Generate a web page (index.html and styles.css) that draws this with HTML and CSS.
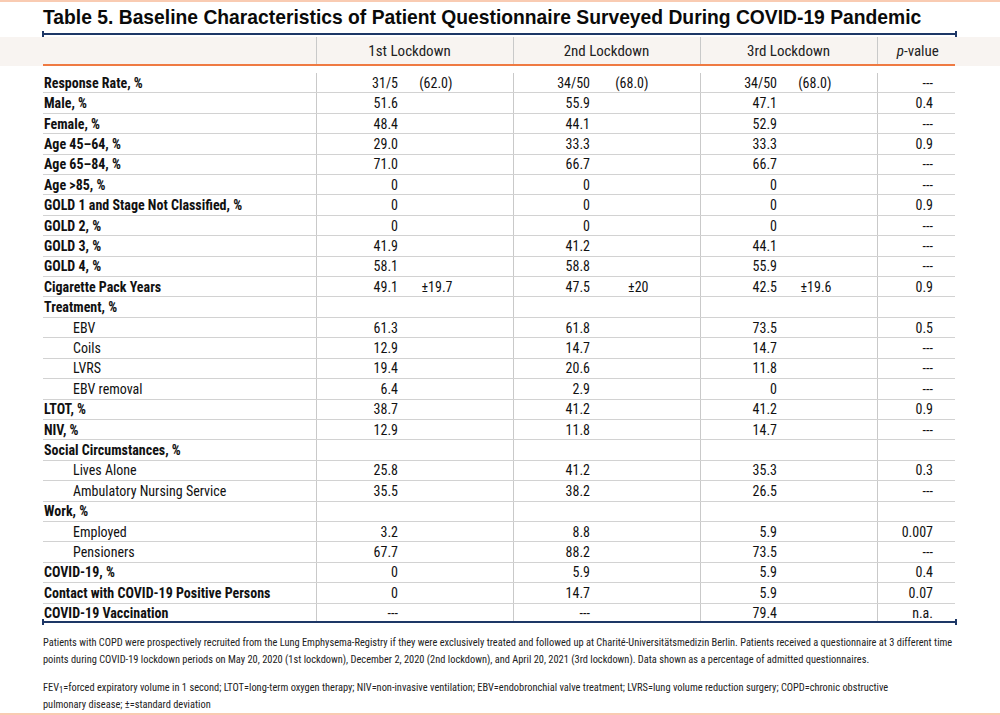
FILE: index.html
```html
<!DOCTYPE html>
<html>
<head>
<meta charset="utf-8">
<link rel="stylesheet" href="styles.css">
</head>
<body>
<div class="page">
  <h1 class="title">Table 5. Baseline Characteristics of Patient Questionnaire Surveyed During COVID-19 Pandemic</h1>
  <div class="rule"></div>
  <div class="band">
    <table class="grid head">
      <colgroup>
        <col class="c-label"><col class="c-v1"><col class="c-s1"><col class="c-v2"><col class="c-s2"><col class="c-v3"><col class="c-s3"><col class="c-p">
      </colgroup>
      <tr>
        <th></th>
        <th colspan="2" class="g">1st Lockdown</th>
        <th colspan="2" class="g">2nd Lockdown</th>
        <th colspan="2" class="g">3rd Lockdown</th>
        <th class="g"><i>p</i>-value</th>
      </tr>
    </table>
  </div>
  <div class="body-wrap">
    <table class="grid body">
      <colgroup>
        <col class="c-label"><col class="c-v1"><col class="c-s1"><col class="c-v2"><col class="c-s2"><col class="c-v3"><col class="c-s3"><col class="c-p">
      </colgroup>
      <tr><td class="lab">Response Rate, %</td><td class="v g">31/5</td><td class="s s1">(62.0)</td><td class="v g">34/50</td><td class="s s2">(68.0)</td><td class="v g">34/50</td><td class="s s3">(68.0)</td><td class="p g">---</td></tr>
      <tr><td class="lab">Male, %</td><td class="v g">51.6</td><td class="s s1"></td><td class="v g">55.9</td><td class="s s2"></td><td class="v g">47.1</td><td class="s s3"></td><td class="p g">0.4</td></tr>
      <tr><td class="lab">Female, %</td><td class="v g">48.4</td><td class="s s1"></td><td class="v g">44.1</td><td class="s s2"></td><td class="v g">52.9</td><td class="s s3"></td><td class="p g">---</td></tr>
      <tr><td class="lab">Age 45–64, %</td><td class="v g">29.0</td><td class="s s1"></td><td class="v g">33.3</td><td class="s s2"></td><td class="v g">33.3</td><td class="s s3"></td><td class="p g">0.9</td></tr>
      <tr><td class="lab">Age 65–84, %</td><td class="v g">71.0</td><td class="s s1"></td><td class="v g">66.7</td><td class="s s2"></td><td class="v g">66.7</td><td class="s s3"></td><td class="p g">---</td></tr>
      <tr><td class="lab">Age &gt;85, %</td><td class="v g">0</td><td class="s s1"></td><td class="v g">0</td><td class="s s2"></td><td class="v g">0</td><td class="s s3"></td><td class="p g">---</td></tr>
      <tr><td class="lab">GOLD 1 and Stage Not Classified, %</td><td class="v g">0</td><td class="s s1"></td><td class="v g">0</td><td class="s s2"></td><td class="v g">0</td><td class="s s3"></td><td class="p g">0.9</td></tr>
      <tr><td class="lab">GOLD 2, %</td><td class="v g">0</td><td class="s s1"></td><td class="v g">0</td><td class="s s2"></td><td class="v g">0</td><td class="s s3"></td><td class="p g">---</td></tr>
      <tr><td class="lab">GOLD 3, %</td><td class="v g">41.9</td><td class="s s1"></td><td class="v g">41.2</td><td class="s s2"></td><td class="v g">44.1</td><td class="s s3"></td><td class="p g">---</td></tr>
      <tr><td class="lab">GOLD 4, %</td><td class="v g">58.1</td><td class="s s1"></td><td class="v g">58.8</td><td class="s s2"></td><td class="v g">55.9</td><td class="s s3"></td><td class="p g">---</td></tr>
      <tr><td class="lab">Cigarette Pack Years</td><td class="v g">49.1</td><td class="s s1">±19.7</td><td class="v g">47.5</td><td class="s s2">±20</td><td class="v g">42.5</td><td class="s s3">±19.6</td><td class="p g">0.9</td></tr>
      <tr><td class="lab">Treatment, %</td><td class="v g"></td><td class="s s1"></td><td class="v g"></td><td class="s s2"></td><td class="v g"></td><td class="s s3"></td><td class="p g"></td></tr>
      <tr><td class="sub">EBV</td><td class="v g">61.3</td><td class="s s1"></td><td class="v g">61.8</td><td class="s s2"></td><td class="v g">73.5</td><td class="s s3"></td><td class="p g">0.5</td></tr>
      <tr><td class="sub">Coils</td><td class="v g">12.9</td><td class="s s1"></td><td class="v g">14.7</td><td class="s s2"></td><td class="v g">14.7</td><td class="s s3"></td><td class="p g">---</td></tr>
      <tr><td class="sub">LVRS</td><td class="v g">19.4</td><td class="s s1"></td><td class="v g">20.6</td><td class="s s2"></td><td class="v g">11.8</td><td class="s s3"></td><td class="p g">---</td></tr>
      <tr><td class="sub">EBV removal</td><td class="v g">6.4</td><td class="s s1"></td><td class="v g">2.9</td><td class="s s2"></td><td class="v g">0</td><td class="s s3"></td><td class="p g">---</td></tr>
      <tr><td class="lab">LTOT, %</td><td class="v g">38.7</td><td class="s s1"></td><td class="v g">41.2</td><td class="s s2"></td><td class="v g">41.2</td><td class="s s3"></td><td class="p g">0.9</td></tr>
      <tr><td class="lab">NIV, %</td><td class="v g">12.9</td><td class="s s1"></td><td class="v g">11.8</td><td class="s s2"></td><td class="v g">14.7</td><td class="s s3"></td><td class="p g">---</td></tr>
      <tr><td class="lab">Social Circumstances, %</td><td class="v g"></td><td class="s s1"></td><td class="v g"></td><td class="s s2"></td><td class="v g"></td><td class="s s3"></td><td class="p g"></td></tr>
      <tr><td class="sub">Lives Alone</td><td class="v g">25.8</td><td class="s s1"></td><td class="v g">41.2</td><td class="s s2"></td><td class="v g">35.3</td><td class="s s3"></td><td class="p g">0.3</td></tr>
      <tr><td class="sub">Ambulatory Nursing Service</td><td class="v g">35.5</td><td class="s s1"></td><td class="v g">38.2</td><td class="s s2"></td><td class="v g">26.5</td><td class="s s3"></td><td class="p g">---</td></tr>
      <tr><td class="lab">Work, %</td><td class="v g"></td><td class="s s1"></td><td class="v g"></td><td class="s s2"></td><td class="v g"></td><td class="s s3"></td><td class="p g"></td></tr>
      <tr><td class="sub">Employed</td><td class="v g">3.2</td><td class="s s1"></td><td class="v g">8.8</td><td class="s s2"></td><td class="v g">5.9</td><td class="s s3"></td><td class="p g">0.007</td></tr>
      <tr><td class="sub">Pensioners</td><td class="v g">67.7</td><td class="s s1"></td><td class="v g">88.2</td><td class="s s2"></td><td class="v g">73.5</td><td class="s s3"></td><td class="p g">---</td></tr>
      <tr><td class="lab">COVID-19, %</td><td class="v g">0</td><td class="s s1"></td><td class="v g">5.9</td><td class="s s2"></td><td class="v g">5.9</td><td class="s s3"></td><td class="p g">0.4</td></tr>
      <tr><td class="lab">Contact with COVID-19 Positive Persons</td><td class="v g">0</td><td class="s s1"></td><td class="v g">14.7</td><td class="s s2"></td><td class="v g">5.9</td><td class="s s3"></td><td class="p g">0.07</td></tr>
      <tr class="last"><td class="lab">COVID-19 Vaccination</td><td class="v g">---</td><td class="s s1"></td><td class="v g">---</td><td class="s s2"></td><td class="v g">79.4</td><td class="s s3"></td><td class="p g">n.a.</td></tr>
    </table>
  </div>
  <div class="rule rule-bottom"></div>
  <div class="notes">
    <p>Patients with COPD were prospectively recruited from the Lung Emphysema-Registry if they were exclusively treated and followed up at Charité-Universitätsmedizin Berlin. Patients received a questionnaire at 3 different time<br>points during COVID-19 lockdown periods on May 20, 2020 (1st lockdown), December 2, 2020 (2nd lockdown), and April 20, 2021 (3rd lockdown). Data shown as a percentage of admitted questionnaires.</p>
    <p>FEV<sub>1</sub>=forced expiratory volume in 1 second; LTOT=long-term oxygen therapy; NIV=non-invasive ventilation; EBV=endobronchial valve treatment; LVRS=lung volume reduction surgery; COPD=chronic obstructive<br>pulmonary disease; ±=standard deviation</p>
  </div>
</div>
</body>
</html>
```

FILE: styles.css
```css
html, body {
  margin: 0;
  padding: 0;
  background: #ffffff;
}

.page {
  width: 1000px;
  height: 715px;
  box-sizing: border-box;
  border-top: 2px solid #f9cbb2;
  border-bottom: 2px solid #f9cbb2;
  overflow: hidden;
  color: #111;
}

.title {
  margin: 5px 0 0 43px;
  font: bold 19.3px/22px "Liberation Sans", Arial, sans-serif;
  color: #0a0a0a;
}

.rule {
  margin: 2px 0 0 42px;
  width: 915px;
  height: 6px;
  box-sizing: border-box;
  border-left: 2px solid #1d3766;
  border-right: 2px solid #1d3766;
  background: linear-gradient(#1d3766, #1d3766) center / 100% 2px no-repeat;
}

.rule-bottom {
  margin-top: -4px;
}

.band {
  background: #f8f4f1;
  padding-left: 43px;
}

.grid {
  border-collapse: collapse;
  table-layout: fixed;
  width: 912px;
  font-family: Roboto, "Liberation Sans", Arial, sans-serif;
  font-stretch: 82%;
}

.c-label { width: 273px; }
.c-v1 { width: 84px; }
.c-s1 { width: 113px; }
.c-v2 { width: 79px; }
.c-s2 { width: 108px; }
.c-v3 { width: 79px; }
.c-s3 { width: 98px; }
.c-p { width: 78px; }

.head th {
  height: 27px;
  padding: 0;
  font-weight: normal;
  font-size: 15px;
  font-stretch: 78%;
  line-height: 18px;
  color: #222;
  text-align: center;
  vertical-align: middle;
  border-bottom: 2px solid #ef7a42;
}

.head th:nth-child(2) { padding-right: 10px; }
.head th:last-child { padding-left: 3px; }

.g {
  border-left: 1px solid #c9c9c9;
}

.body-wrap {
  padding: 7px 0 0 43px;
}

.body td {
  height: 19.42px;
  padding: 0;
  font-size: 14px;
  line-height: 16px;
  white-space: nowrap;
  vertical-align: middle;
  border-bottom: 1px solid #d2d2d2;
  color: #111;
}

.body tr.last td {
  border-bottom: none;
}

.body td.lab {
  font-weight: bold;
  padding-left: 1px;
}

.body td.sub {
  padding-left: 30px;
}

.body td.v {
  text-align: right;
  padding-right: 2px;
}

.body td.s {
  text-align: right;
}

.body td.s1 { padding-right: 60px; }
.body td.s2 { padding-right: 51px; }
.body td.s3 { padding-right: 45px; }

.body td.p {
  text-align: right;
  padding-right: 22px;
}

.notes {
  margin: 9px 0 0 43px;
  font: 10.4px/17px Roboto, "Liberation Sans", Arial, sans-serif;
  font-stretch: 78%;
  color: #222;
}

.notes p {
  margin: 0 0 11px 0;
  white-space: nowrap;
}

.notes sub {
  font-size: 8.5px;
  vertical-align: -2px;
  line-height: 0;
}
```
